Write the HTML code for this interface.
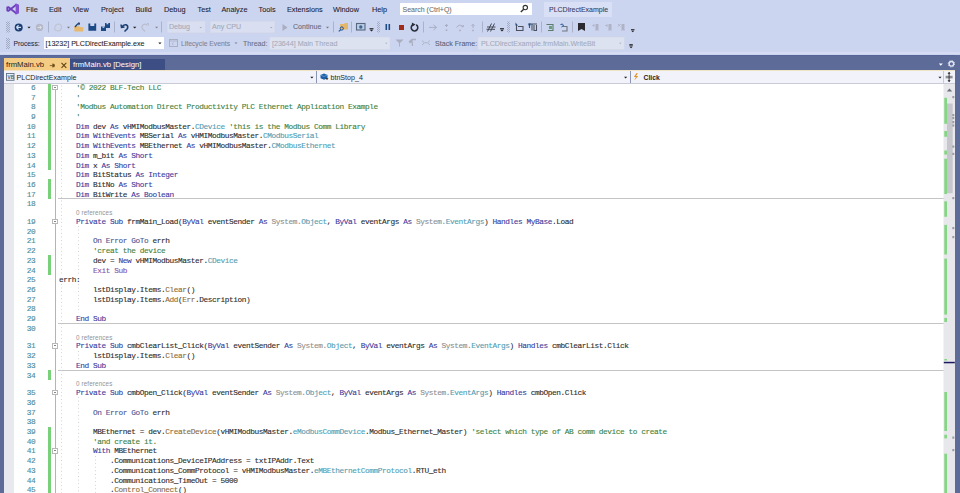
<!DOCTYPE html>
<html><head><meta charset="utf-8">
<style>
*{margin:0;padding:0;box-sizing:border-box}
html,body{width:960px;height:493px;overflow:hidden;background:#CCD5F0;font-family:"Liberation Sans",sans-serif;position:relative}
.a{position:absolute}
.mi{position:absolute;top:4.7px;font-size:7.3px;color:#1e1e2e;-webkit-text-stroke:0.08px currentColor;line-height:10px;white-space:nowrap}
.t2{position:absolute;font-size:7.7px;line-height:10px;white-space:nowrap}
.sep{position:absolute;width:1px;background:#a8b0cc}
.grip{position:absolute;width:4px;background-image:radial-gradient(circle,#8890a8 0.6px,transparent 0.9px);background-size:2px 2px}
#tabwell{position:absolute;left:0;top:54.5px;width:960px;height:16.5px;background:#5D6B99;border-top:1px solid #56649a}
#nav{position:absolute;left:4px;top:69.5px;width:951px;height:15px;background:#F2F3FA;border-top:1.5px solid #f1e4c4;border-bottom:2px solid #C9CCD7}
#editor{position:absolute;left:4px;top:84px;width:951px;height:409px;background:#fff;overflow:hidden}
.ln{position:absolute;left:55px;height:9.7px;line-height:9.7px;padding-top:1.6px;font-family:"Liberation Mono",monospace;font-size:7.8px;letter-spacing:-0.43px;white-space:pre;color:#2a2a2a;-webkit-text-stroke:0.1px currentColor}
.nm{position:absolute;left:9.2px;width:22px;text-align:right;height:9.7px;line-height:9.7px;padding-top:1.6px;font-family:"Liberation Mono",monospace;font-size:7.8px;letter-spacing:-0.43px;color:#4f8a99;-webkit-text-stroke:0.12px currentColor}
.cl{position:absolute;left:72px;height:8px;line-height:8px;padding-top:0.7px;font-size:6.3px;letter-spacing:0.12px;color:#939393}
b{font-weight:normal}
.k{color:#3a3a9c}.g{color:#3a8040}.t{color:#4f9cb2}.m{color:#8a6a3a}.p{color:#8652a8}.o{color:#4d5592}.u{color:#2a2a2a}.f{color:#8c8c8c}
.sepl{position:absolute;left:53.5px;width:886px;height:1px;background:#c4c4c4}
.gb{position:absolute;left:44px;width:2.8px;background:#78d078}
.cb{position:absolute;left:48px;width:5.8px;height:5.8px;background:#fff;border:1px solid #b8b8b8}
.cb:after{content:"";position:absolute;left:1px;top:1.3px;width:1.6px;height:1px;background:#888}
.dg{position:absolute;width:1px;background-image:linear-gradient(#d0d0d4 35%,transparent 35%);background-size:1px 3.6px}
</style></head><body>
<!-- menu -->
<svg class="a" style="left:0;top:0" width="24" height="18" viewBox="0 0 24 18"><path d="M16.5 4.6 L8.3 10.9 L7.3 10.6 L7.3 7.4 L8.3 7.1 L16.5 13.4" stroke="#6f42bd" stroke-width="1.9" fill="none" stroke-linejoin="round"/><path d="M15.6 3.3 L19 4.8 L19 13.2 L15.6 14.7 Z" fill="#8352d0"/></svg>
<div class="mi" style="left:26px">File</div>
<div class="mi" style="left:49px">Edit</div>
<div class="mi" style="left:73px">View</div>
<div class="mi" style="left:101px">Project</div>
<div class="mi" style="left:135.5px">Build</div>
<div class="mi" style="left:164px">Debug</div>
<div class="mi" style="left:197.5px">Test</div>
<div class="mi" style="left:221.5px">Analyze</div>
<div class="mi" style="left:258.5px">Tools</div>
<div class="mi" style="left:287px">Extensions</div>
<div class="mi" style="left:333px">Window</div>
<div class="mi" style="left:372px">Help</div>
<div class="a" style="left:400px;top:3px;width:132px;height:12px;background:#fff"></div>
<svg class="a" style="left:518px;top:3px" width="12" height="12" viewBox="518 3 12 12"><circle cx="525.3" cy="7.6" r="2.2" fill="none" stroke="#333" stroke-width="1.1"/><path d="M523.7 9.2 L520.8 12" stroke="#333" stroke-width="1.4"/></svg>
<div class="mi" style="left:402.5px;font-size:7px;color:#6d6d6d">Search (Ctrl+Q)</div>
<div class="a" style="left:544px;top:2px;width:68px;height:15px;background:#D9E0F5"></div>
<div class="mi" style="left:549px;font-size:7px;color:#3a3a5a">PLCDirectExample</div>

<!-- toolbar1 -->
<svg class="a" style="left:0;top:0" width="960" height="54" viewBox="0 0 960 54">
<defs>
<pattern id="gp" width="2" height="2" patternUnits="userSpaceOnUse"><rect x="0" y="0" width="1" height="1" fill="#a3abc4"/><rect x="1" y="1" width="1" height="1" fill="#a3abc4"/></pattern>
</defs>
<!-- grips -->
<rect x="6" y="21.5" width="4" height="11" fill="url(#gp)"/>
<rect x="6" y="38" width="4" height="11" fill="url(#gp)"/>
<rect x="377" y="21.5" width="3" height="11" fill="url(#gp)"/>
<rect x="507" y="21.5" width="3" height="11" fill="url(#gp)"/>
<!-- separators -->
<g fill="#a9b1cb">
<rect x="48" y="21.5" width="1" height="11"/>
<rect x="114" y="21.5" width="1" height="11"/>
<rect x="161" y="21.5" width="1" height="11"/>
<rect x="333" y="21.5" width="1" height="11"/>
<rect x="351" y="21.5" width="1" height="11"/>
<rect x="423" y="21.5" width="1" height="11"/>
<rect x="482" y="21.5" width="1" height="11"/>
<rect x="541" y="21.5" width="1" height="11"/>
<rect x="572" y="21.5" width="1" height="11"/>
</g>
<!-- back -->
<circle cx="18.7" cy="27.4" r="4" fill="#1b3f72"/>
<path d="M16.3 27.4 L18.6 25.3 M16.3 27.4 L18.6 29.5 M16.5 27.4 L21 27.4" stroke="#cfe0f5" stroke-width="1.2" fill="none"/>
<!-- dropdown arrows -->
<g fill="#1e1e1e">
<path d="M27.4 26.8 L30.6 26.8 L29 28.6Z"/>
<path d="M67 26.8 L70 26.8 L68.5 28.4Z" fill="#777"/>
<path d="M133 26.8 L136.4 26.8 L134.7 28.6Z"/>
<path d="M155 26.8 L158.2 26.8 L156.6 28.4Z" fill="#888"/>
<path d="M326 26.8 L329 26.8 L327.5 28.4Z" fill="#777"/>
<path d="M369.5 29.5 L373.5 29.5 L371.5 31.5Z"/><rect x="369.5" y="28" width="4" height="0.8"/>
<path d="M500 29.5 L504 29.5 L502 31.5Z"/><rect x="500" y="28" width="4" height="0.8"/>
<path d="M631 30.5 L634.5 30.5 L632.75 32.3Z"/><rect x="631" y="29" width="3.5" height="0.8"/>
</g>
<!-- forward disabled -->
<circle cx="39.5" cy="27.4" r="3.7" fill="#b4b8c6"/>
<path d="M37.5 27.4 L41.3 27.4 M39.7 25.8 L41.4 27.4 L39.7 29" stroke="#dde2ee" stroke-width="1" fill="none"/>
<!-- new project disabled -->
<path d="M55 30 Q54 25 58 24 Q62 24 61.5 28 Q61 31 58 31 Z" fill="none" stroke="#c0c4d0" stroke-width="1.2"/>
<!-- open -->
<path d="M74 26.5 L78 26 L80 27 L83.5 27.2 L83 31.4 L74.5 31.4 Z" fill="#e6b96e"/>
<path d="M75 27 L77.5 24 L79.5 23.5" stroke="#1b3f72" stroke-width="1.3" fill="none"/>
<path d="M78.5 22.5 L80 23.6 L78.6 24.8" stroke="#1b3f72" stroke-width="1" fill="none"/>
<!-- save -->
<path d="M88.4 23.6 L96.2 23.6 L96.2 30.8 L88.4 30.8 Z M90.3 23.6 L90.3 26 L94.3 26 L94.3 23.6 Z" fill="#1b4a86" fill-rule="evenodd"/>
<!-- save all -->
<path d="M101 26.5 L106 26.5 L106 31 L101 31 Z" fill="#1b4a86"/>
<path d="M105 23 L110 23 L110 28 L105 28 Z" fill="#1b4a86"/>
<rect x="102.5" y="26.5" width="1.8" height="1.3" fill="#cdd5ee"/>
<rect x="106.5" y="23" width="1.8" height="1.3" fill="#cdd5ee"/>
<!-- undo -->
<path d="M121 24.5 L121.5 27.5 L124.5 27 M121.6 27.2 Q123.5 24.3 126 24.8 Q128.5 25.8 127.5 28.5 L124.5 31.5" stroke="#1b3f72" stroke-width="1.5" fill="none"/>
<!-- redo disabled -->
<path d="M145 31.5 L142.5 29 Q141 26 143.5 24.5 Q146 23.5 147.5 25.5" stroke="#b8bccb" stroke-width="1.1" fill="none"/>
<path d="M147 23.5 L148.5 23.5 L148.5 25.5" stroke="#b8bccb" stroke-width="1" fill="none"/>
<!-- combos -->
<rect x="167" y="21" width="38.6" height="12" fill="#d9dff0" stroke="#cdd3e6" stroke-width="0.6"/>
<rect x="210" y="21" width="65" height="12" fill="#d9dff0" stroke="#cdd3e6" stroke-width="0.6"/>
<path d="M199.5 27 L202 27 L200.75 28.2Z" fill="#a0a6b8"/>
<path d="M270 27 L272.5 27 L271.25 28.2Z" fill="#a0a6b8"/>
<!-- play disabled -->
<path d="M282.5 24 L287.5 27.5 L282.5 31 Z" fill="#a9aec0"/>
<!-- find -->
<path d="M340 24 L344 24 L345 23 L348 23 L348 29.5 L340.5 29.5 Z" fill="#e3b66a"/>
<circle cx="341.8" cy="28.5" r="1.6" fill="none" stroke="#1b4f8e" stroke-width="1"/>
<path d="M340.8 29.6 L338.8 31.4" stroke="#1b4f8e" stroke-width="1.2"/>
<!-- screenshot -->
<rect x="356.5" y="23.5" width="8.5" height="6.5" fill="#b9cde6" stroke="#56677e" stroke-width="1.1"/>
<circle cx="360.8" cy="27" r="1.7" fill="#3f6690"/>
<!-- pause -->
<rect x="385.5" y="24" width="1.6" height="6" fill="#1b4a86"/>
<rect x="388.5" y="24" width="1.6" height="6" fill="#1b4a86"/>
<!-- stop -->
<rect x="399" y="25" width="5" height="5" fill="#a12b1b"/>
<!-- restart -->
<path d="M413.2 24.6 A3.3 3.3 0 1 0 416.2 24.8" stroke="#2a2f3a" stroke-width="1.6" fill="none"/>
<path d="M411.8 22.6 L415.6 24.4 L412.4 26.6 Z" fill="#2a2f3a"/>
<!-- step gray -->
<path d="M429 27.4 L436.5 27.4 M433.5 24.8 L436.5 27.4 L433.5 30" stroke="#a8aec2" stroke-width="1" fill="none"/>
<path d="M446.5 24.5 L446.5 27 M445 26 L446.5 24.3 L448 26" stroke="#a8aec2" stroke-width="1" fill="none"/>
<circle cx="446.5" cy="30.2" r="0.9" fill="#a8aec2"/>
<path d="M456.5 27.5 Q459.5 23.5 463 26.5 M461.5 26.8 L463.3 26.8 L463.3 25" stroke="#a8aec2" stroke-width="1" fill="none"/>
<circle cx="460" cy="30.4" r="0.9" fill="#a8aec2"/>
<path d="M473 24.5 L473 28 M471.5 26 L473 24.3 L474.5 26" stroke="#a8aec2" stroke-width="1" fill="none"/>
<circle cx="473" cy="30.4" r="0.9" fill="#a8aec2"/>
<!-- comment icon -->
<path d="M487.5 31.5 L491.5 23.5 M490.5 31.5 L494.5 23.5 M487 27 L495.5 27 M486.5 29.3 L495 29.3" stroke="#444a58" stroke-width="1" fill="none"/>
<!-- icons 515-537 -->
<path d="M515.5 22.5 L518 25.5 L515.5 25.5 Z" fill="#1b4f8e"/>
<path d="M516.5 25 L516.5 30.5 L523 30.5 L523 26.5 L518 26.5" stroke="#4a5060" stroke-width="1.1" fill="none"/>
<path d="M528.5 24 L537 24 M529.5 24 L529.5 28 M532 24 L532 30.5 M534 25 L534 30.5 L536.5 30.5 L536.5 25" stroke="#4a5060" stroke-width="1.1" fill="none"/>
<rect x="528.5" y="23.5" width="2" height="2" fill="#1b4f8e"/>
<!-- 546-567 -->
<path d="M546.5 24.5 L553 24.5 L553 30.5 L548 30.5" stroke="#5a7a6a" stroke-width="1.1" fill="none"/>
<rect x="549" y="26" width="3" height="3" fill="#6aa080"/>
<path d="M560.5 24.5 Q562.5 23.5 563.5 25 Q563 26.5 561.5 27" stroke="#1b4f8e" stroke-width="1" fill="none"/>
<path d="M563 26.5 L567 26.5 L567 31 L562 31" stroke="#707680" stroke-width="1.1" fill="none"/>
<!-- bookmark -->
<path d="M578 23 L585 23 L585 31 L581.5 29 L578 31 Z" fill="#2a2a30"/>
<!-- gray bookmarks -->
<g fill="#aeb4c6">
<path d="M595.5 24 L598.5 24 L598.5 31 L597 30 L595.5 31 Z"/><path d="M592 25.5 L594.5 24 L594.5 27 Z"/>
<path d="M608.5 24 L611.5 24 L611.5 31 L610 30 L608.5 31 Z"/><path d="M605 25.5 L607.5 24 L607.5 27 Z"/>
<path d="M621.5 24 L624.5 24 L624.5 31 L623 30 L621.5 31 Z"/><path d="M618 24 L620.5 26.5 M618 26.5 L620.5 24" stroke="#aeb4c6" stroke-width="0.9"/>
</g>
</svg>
<div class="mi" style="font-size:7.1px;top:21.9px;left:169px;color:#a3a8b9">Debug</div>
<div class="mi" style="font-size:7.1px;top:21.9px;left:212px;color:#a3a8b9">Any CPU</div>
<div class="mi" style="font-size:7.1px;top:21.9px;left:293px;color:#656a7d">Continue</div>

<!-- toolbar2 -->
<div class="mi" style="font-size:6.7px;top:38.8px;left:13.6px;color:#2a2d3a">Process:</div>
<div class="a" style="left:43.5px;top:36.5px;width:120.5px;height:12.6px;background:#fff"></div>
<div class="mi" style="font-size:7.1px;top:38.5px;left:45.5px;color:#1e1e1e">[13232] PLCDirectExample.exe</div>
<svg class="a" style="left:0;top:0" width="960" height="54" viewBox="0 0 960 54">
<path d="M158.3 42.4 L161.5 42.4 L159.9 44.2Z" fill="#1e1e1e"/>
<rect x="169.5" y="39.5" width="8" height="7" fill="none" stroke="#aab0c2" stroke-width="1"/>
<path d="M169.5 41 L177.5 41" stroke="#aab0c2" stroke-width="0.8"/>
<path d="M173.5 42.5 L172 43.8 L173.5 45" stroke="#aab0c2" stroke-width="0.8" fill="none"/>
<path d="M234.5 42.6 L237.5 42.6 L236 44Z" fill="#7a7f90"/>
<rect x="269.5" y="37" width="120.5" height="12.5" fill="#dde2f1" stroke="#d2d7e8" stroke-width="0.6"/>
<path d="M385 42.8 L387.5 42.8 L386.25 44Z" fill="#a9aebf"/>
<path d="M395.5 39.5 L403.5 39.5 L400 43 L400 46.5 L399 46.5 L399 43 Z" fill="#a9aec0"/>
<path d="M409 42 L412 39.5 L416 39.5 M409.5 43 L412 41 L412.5 46" stroke="#a9aec0" stroke-width="1.3" fill="none"/>
<path d="M422 40.5 L424.5 42.8 L422 45 M430 40.5 L427.5 42.8 L430 45 M425 42.8 L427 42.8" stroke="#aab0c2" stroke-width="0.9" fill="none"/>
<rect x="478" y="37" width="146.4" height="12.5" fill="#dde2f1" stroke="#d2d7e8" stroke-width="0.6"/>
<path d="M619 42.8 L621.5 42.8 L620.25 44Z" fill="#a9aebf"/>
<path d="M629.3 46.5 L632.8 46.5 L631.05 48.3Z" fill="#1e1e1e"/><rect x="629.3" y="44.2" width="3.5" height="0.8" fill="#1e1e1e"/><rect x="629.3" y="45.4" width="3.5" height="0.6" fill="#1e1e1e"/>
</svg>
<div class="mi" style="font-size:7.1px;top:38.5px;left:181px;font-size:6.8px;color:#7d8294">Lifecycle Events</div>
<div class="mi" style="font-size:7.1px;top:38.5px;left:243px;color:#6a6f80">Thread:</div>
<div class="mi" style="font-size:7.1px;top:38.5px;left:272px;color:#a5aabb">[23644] Main Thread</div>
<div class="mi" style="font-size:7.1px;top:38.5px;left:435px;color:#5a5f70">Stack Frame:</div>
<div class="mi" style="font-size:7.1px;top:38.5px;left:481px;color:#a5aabb">PLCDirectExample.frmMain.WriteBit</div>


<div class="a" style="left:0;top:52.3px;width:960px;height:2.2px;background:#D5DCF3"></div>
<div id="tabwell"></div>
<div class="a" style="left:4px;top:58px;width:66px;height:12.5px;background:#F5CC84"></div>
<div class="t2" style="left:6px;top:59.6px;color:#1e1e1e">frmMain.vb</div>
<div class="a" style="left:70px;top:59px;width:95px;height:10.5px;background:#3D4E84"></div>
<div class="t2" style="left:73px;top:59.7px;color:#fff">frmMain.vb [Design]</div>

<div id="nav"></div>

<svg class="a" style="left:0;top:54px" width="960" height="31" viewBox="0 54 960 31">
<!-- tab pin & close -->
<path d="M49.8 65.6 L52.5 65.6" stroke="#7a5a20" stroke-width="0.9"/><path d="M52.3 63.6 L54.3 64 L55 65.5 L54.3 67 L52.3 67.4 Z" fill="#6e5018"/>
<path d="M61.5 62.8 L66.3 67.8 M66.3 62.8 L61.5 67.8" stroke="#5e4512" stroke-width="1.1"/>
<!-- tab well dropdown & gear -->
<path d="M938.8 63.6 L942.8 63.6 L940.8 65.8 Z" fill="#fff"/>
<circle cx="951.4" cy="63.8" r="2.3" fill="none" stroke="#dfe4f4" stroke-width="1.4"/>
<circle cx="951.4" cy="63.8" r="3.2" fill="none" stroke="#dfe4f4" stroke-width="0.9" stroke-dasharray="1.2 1.3"/>
<!-- nav dividers -->
<rect x="316" y="71" width="1" height="12" fill="#8b95b5"/>
<rect x="630" y="71" width="1" height="12" fill="#8b95b5"/>
<rect x="943" y="71" width="1" height="12" fill="#c5c9d6"/>
<!-- arrows -->
<path d="M310.3 76.8 L313.5 76.8 L311.9 78.6 Z" fill="#1e1e1e"/>
<path d="M624 76.8 L627.2 76.8 L625.6 78.6 Z" fill="#1e1e1e"/>
<path d="M938.4 76.8 L941.6 76.8 L940 78.6 Z" fill="#1e1e1e"/>
<!-- VB icon -->
<rect x="6.5" y="73.5" width="7.5" height="6.8" fill="#e9eef6" stroke="#5d7288" stroke-width="0.9"/>
<text x="7.6" y="79" font-family="Liberation Sans" font-size="4.6" font-weight="bold" fill="#4a5f78">VB</text>
<!-- btnStop icon -->
<path d="M320.5 75 L324 73.5 L327.5 75 L327.5 78.3 L324 79.8 L320.5 78.3 Z" fill="#1b5fa8"/>
<path d="M320.5 75 L324 76.5 L327.5 75" stroke="#7fb0e0" stroke-width="0.6" fill="none"/>
<path d="M325.5 78.2 L328.5 78.2 L327 80 Z" fill="#1e1e1e"/>
<!-- lightning -->
<path d="M636.5 73 L633.8 77 L635.8 77 L634.2 80.5 L638.3 76 L636.2 76 L637.8 73 Z" fill="#e09a30"/>
<!-- split icon -->
<rect x="945.6" y="75.8" width="7" height="2.6" fill="#8e8e94"/>
<path d="M949.1 72.3 L949.1 81.8" stroke="#2a2a2a" stroke-width="0.9" fill="none"/><path d="M947.5 73.8 L949.1 72 L950.7 73.8 Z M947.5 80.3 L949.1 82.1 L950.7 80.3 Z" fill="#2a2a2a"/>
</svg>
<div class="t2" style="left:16.5px;top:72.9px;font-size:7.1px;color:#1e1e1e">PLCDirectExample</div>
<div class="t2" style="left:330.5px;top:72.9px;font-size:7.1px;color:#1e1e1e">btnStop_4</div>
<div class="t2" style="left:643.5px;top:72.9px;font-size:6.8px;font-weight:bold;color:#1e1e1e">Click</div>

<div id="editor">
<div class="a" style="left:0;top:0;width:10px;height:409px;background:#E8E9EE"></div>
<div class=gb style="top:-1.6px;height:87.3px"></div>
<div class=gb style="top:95.4px;height:19.4px"></div>
<div class=gb style="top:171.3px;height:19.4px"></div>
<div class=gb style="top:286.0px;height:9.7px"></div>
<div class=gb style="top:342.5px;height:67.9px"></div>
<div class=nm style="top:-1.6px">6</div>
<div class=nm style="top:8.1px">7</div>
<div class=nm style="top:17.8px">8</div>
<div class=nm style="top:27.5px">9</div>
<div class=nm style="top:37.2px">10</div>
<div class=nm style="top:46.9px">11</div>
<div class=nm style="top:56.6px">12</div>
<div class=nm style="top:66.3px">13</div>
<div class=nm style="top:76.0px">14</div>
<div class=nm style="top:85.7px">15</div>
<div class=nm style="top:95.4px">16</div>
<div class=nm style="top:105.1px">17</div>
<div class=nm style="top:114.8px">18</div>
<div class=nm style="top:132.5px">19</div>
<div class=nm style="top:142.2px">20</div>
<div class=nm style="top:151.9px">21</div>
<div class=nm style="top:161.6px">22</div>
<div class=nm style="top:171.3px">23</div>
<div class=nm style="top:181.0px">24</div>
<div class=nm style="top:190.7px">25</div>
<div class=nm style="top:200.4px">26</div>
<div class=nm style="top:210.1px">27</div>
<div class=nm style="top:219.8px">28</div>
<div class=nm style="top:229.5px">29</div>
<div class=nm style="top:239.2px">30</div>
<div class=nm style="top:256.9px">31</div>
<div class=nm style="top:266.6px">32</div>
<div class=nm style="top:276.3px">33</div>
<div class=nm style="top:286.0px">34</div>
<div class=nm style="top:303.7px">35</div>
<div class=nm style="top:313.4px">36</div>
<div class=nm style="top:323.1px">37</div>
<div class=nm style="top:332.8px">38</div>
<div class=nm style="top:342.5px">39</div>
<div class=nm style="top:352.2px">40</div>
<div class=nm style="top:361.9px">41</div>
<div class=nm style="top:371.6px">42</div>
<div class=nm style="top:381.3px">43</div>
<div class=nm style="top:391.0px">44</div>
<div class=nm style="top:400.7px">45</div>
<div class="a" style="left:51px;top:5px;width:1px;height:404px;background:#b4b4b4"></div>
<div class=sepl style="top:114.3px"></div>
<div class=sepl style="top:238.7px"></div>
<div class=sepl style="top:285.5px"></div>
<div class=cb style="top:0.5px"></div>
<div class=cb style="top:134.5px"></div>
<div class=cb style="top:258.9px"></div>
<div class=cb style="top:305.7px"></div>
<div class=cb style="top:363.9px"></div>
<div class=dg style="left:57.0px;top:-1.6px;height:192.3px"></div>
<div class=dg style="left:57.0px;top:200.4px;height:208.6px"></div>
<div class=dg style="left:74.0px;top:142.2px;height:48.5px"></div>
<div class=dg style="left:74.0px;top:200.4px;height:29.1px"></div>
<div class=dg style="left:74.0px;top:266.6px;height:9.7px"></div>
<div class=dg style="left:74.0px;top:313.4px;height:95.6px"></div>
<div class=dg style="left:91.0px;top:371.6px;height:37.4px"></div><div class=ln style="top:-1.6px">    <b class=g>'© 2022 BLF-Tech LLC</b></div>
<div class=ln style="top:8.1px">    <b class=g>'</b></div>
<div class=ln style="top:17.8px">    <b class=g>'Modbus Automation Direct Productivity PLC Ethernet Application Example</b></div>
<div class=ln style="top:27.5px">    <b class=g>'</b></div>
<div class=ln style="top:37.2px">    <b class=k>Dim</b> dev <b class=k>As</b> vHMIModbusMaster.<b class=t>CDevice</b> <b class=g>'this is the Modbus Comm Library</b></div>
<div class=ln style="top:46.9px">    <b class=k>Dim</b> <b class=k>WithEvents</b> MBSerial <b class=k>As</b> vHMIModbusMaster.<b class=t>CModbusSerial</b></div>
<div class=ln style="top:56.6px">    <b class=k>Dim</b> <b class=k>WithEvents</b> MBEthernet <b class=k>As</b> vHMIModbusMaster.<b class=t>CModbusEthernet</b></div>
<div class=ln style="top:66.3px">    <b class=k>Dim</b> m_bit <b class=k>As</b> <b class=k>Short</b></div>
<div class=ln style="top:76.0px">    <b class=k>Dim</b> x <b class=k>As</b> <b class=k>Short</b></div>
<div class=ln style="top:85.7px">    <b class=k>Dim</b> BitStatus <b class=k>As</b> <b class=k>Integer</b></div>
<div class=ln style="top:95.4px">    <b class=k>Dim</b> BitNo <b class=k>As</b> <b class=k>Short</b></div>
<div class=ln style="top:105.1px">    <b class=k>Dim</b> BitWrite <b class=k>As</b> <b class=k>Boolean</b></div>
<div class=ln style="top:114.8px"></div>
<div class=cl style="top:124.5px">0 references</div>
<div class=ln style="top:132.5px">    <b class=k>Private Sub</b> <b class=u>frmMain_Load</b>(<b class=k>ByVal</b> eventSender <b class=k>As</b> <b class=f>System.</b><b class=t>Object</b>, <b class=k>ByVal</b> eventArgs <b class=k>As</b> <b class=f>System.</b><b class=t>EventArgs</b>) <b class=k>Handles</b> <b class=k>MyBase</b>.Load</div>
<div class=ln style="top:142.2px"></div>
<div class=ln style="top:151.9px">        <b class=o>On Error GoTo</b> errh</div>
<div class=ln style="top:161.6px">        <b class=g>'creat the device</b></div>
<div class=ln style="top:171.3px">        dev = <b class=k>New</b> vHMIModbusMaster.<b class=t>CDevice</b></div>
<div class=ln style="top:181.0px">        <b class=p>Exit Sub</b></div>
<div class=ln style="top:190.7px">errh:</div>
<div class=ln style="top:200.4px">        lstDisplay.Items.<b class=m>Clear</b>()</div>
<div class=ln style="top:210.1px">        lstDisplay.Items.<b class=m>Add</b>(<b class=m>Err</b>.Description)</div>
<div class=ln style="top:219.8px"></div>
<div class=ln style="top:229.5px">    <b class=k>End Sub</b></div>
<div class=ln style="top:239.2px"></div>
<div class=cl style="top:248.9px">0 references</div>
<div class=ln style="top:256.9px">    <b class=k>Private Sub</b> <b class=u>cmbClearList_Click</b>(<b class=k>ByVal</b> eventSender <b class=k>As</b> <b class=f>System.</b><b class=t>Object</b>, <b class=k>ByVal</b> eventArgs <b class=k>As</b> <b class=f>System.</b><b class=t>EventArgs</b>) <b class=k>Handles</b> cmbClearList.Click</div>
<div class=ln style="top:266.6px">        lstDisplay.Items.<b class=m>Clear</b>()</div>
<div class=ln style="top:276.3px">    <b class=k>End Sub</b></div>
<div class=ln style="top:286.0px"></div>
<div class=cl style="top:295.7px">0 references</div>
<div class=ln style="top:303.7px">    <b class=k>Private Sub</b> <b class=u>cmbOpen_Click</b>(<b class=k>ByVal</b> eventSender <b class=k>As</b> <b class=f>System.</b><b class=t>Object</b>, <b class=k>ByVal</b> eventArgs <b class=k>As</b> <b class=f>System.</b><b class=t>EventArgs</b>) <b class=k>Handles</b> cmbOpen.Click</div>
<div class=ln style="top:313.4px"></div>
<div class=ln style="top:323.1px">        <b class=o>On Error GoTo</b> errh</div>
<div class=ln style="top:332.8px"></div>
<div class=ln style="top:342.5px">        MBEthernet = dev.<b class=m>CreateDevice</b>(vHMIModbusMaster.<b class=t>eModbusCommDevice</b>.Modbus_Ethernet_Master) <b class=g>'select which type of AB comm device to create</b></div>
<div class=ln style="top:352.2px">        <b class=g>'and create it.</b></div>
<div class=ln style="top:361.9px">        <b class=k>With</b> MBEthernet</div>
<div class=ln style="top:371.6px">            .Communications_DeviceIPAddress = txtIPAddr.Text</div>
<div class=ln style="top:381.3px">            .Communications_CommProtocol = vHMIModbusMaster.<b class=t>eMBEthernetCommProtocol</b>.RTU_eth</div>
<div class=ln style="top:391.0px">            .Communications_TimeOut = 5000</div>
<div class=ln style="top:400.7px">            .<b class=m>Control_Connect</b>()</div>
</div>
<div class="a" style="left:955px;top:54.5px;width:5px;height:439px;background:#5D6B99"></div>
<div class="a" style="left:0;top:54.5px;width:4px;height:439px;background:#5D6B99"></div>
<!-- scrollbar -->
<svg class="a" style="left:943px;top:84px" width="12" height="409" viewBox="943 84 12 409"><rect x="943.5" y="84" width="11.5" height="409" fill="#E8E8EC"/><path d="M946.8 91.6 L952.2 91.6 L949.5 88.6 Z" fill="#6d707c"/><rect x="947" y="103.5" width="5.7" height="89.7" fill="#C6C7CD"/><rect x="944.3" y="97.8" width="2.7" height="26.0" fill="#84d684"/><rect x="944.3" y="131" width="2.7" height="5.8" fill="#84d684"/><rect x="944.3" y="150.5" width="2.7" height="4.1" fill="#84d684"/><rect x="944.3" y="158.7" width="2.7" height="35.3" fill="#84d684"/><rect x="944.3" y="201.3" width="2.7" height="15.5" fill="#84d684"/><rect x="944.3" y="224.9" width="2.7" height="29.6" fill="#84d684"/><rect x="944.3" y="258.6" width="2.7" height="56.0" fill="#84d684"/><rect x="944.3" y="317.9" width="2.7" height="4.1" fill="#84d684"/><rect x="944.3" y="359" width="2.7" height="1.5" fill="#84d684"/><rect x="944.3" y="392" width="2.7" height="39.0" fill="#84d684"/><rect x="944.3" y="434.7" width="2.7" height="3.7" fill="#84d684"/><rect x="944.3" y="453.7" width="2.7" height="39.3" fill="#84d684"/><rect x="952.3" y="96" width="2" height="2.2" fill="#9a9ca6"/><rect x="952.3" y="114" width="2" height="2.2" fill="#9a9ca6"/><rect x="952.3" y="117" width="2" height="2.2" fill="#9a9ca6"/><rect x="952.3" y="121" width="2" height="2.2" fill="#9a9ca6"/><rect x="952.3" y="124.4" width="2" height="2.2" fill="#9a9ca6"/><rect x="952.3" y="145.5" width="2" height="2.2" fill="#9a9ca6"/><rect x="952.3" y="152.8" width="2" height="2.2" fill="#9a9ca6"/><rect x="952.3" y="197" width="2" height="2.2" fill="#9a9ca6"/><rect x="952.3" y="227" width="2" height="2.2" fill="#9a9ca6"/><rect x="952.3" y="236" width="2" height="2.2" fill="#9a9ca6"/><rect x="952.3" y="436.5" width="2" height="2.2" fill="#9a9ca6"/><rect x="952.3" y="449" width="2" height="2.2" fill="#9a9ca6"/><rect x="943.8" y="361.8" width="11" height="1.5" fill="#1a1a60"/></svg>
</body></html>
